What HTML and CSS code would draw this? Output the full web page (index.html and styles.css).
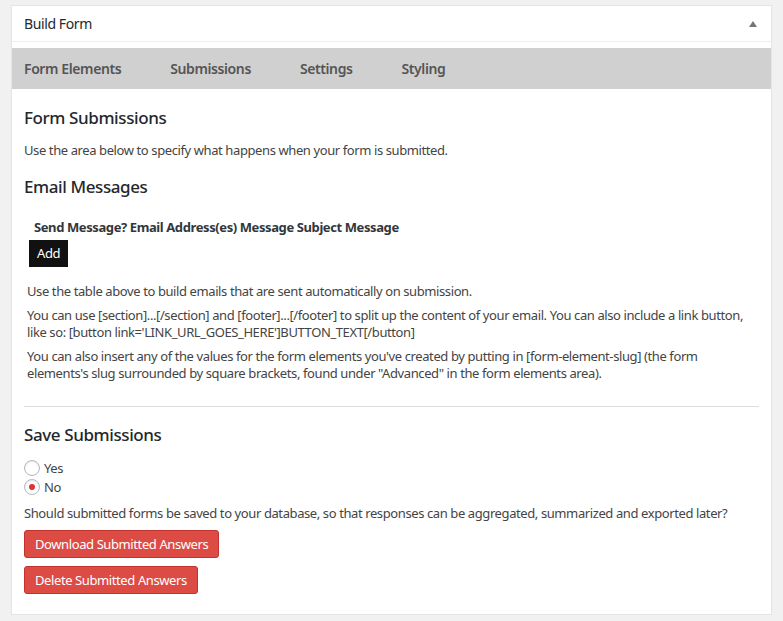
FILE: index.html
```html
<!DOCTYPE html>
<html lang="en">
<head>
    <meta charset="UTF-8">
    <meta name="viewport" content="width=device-width, initial-scale=1.0">
    <title>Build Form</title>
    <link rel="stylesheet" href="styles.css">
</head>
<body>
    <div class="postbox">
        <div class="postbox-header">
            <h2>Build Form</h2>
            <span class="toggle-arrow"></span>
        </div>
        <div class="postbox-inside">
            <ul class="tabs">
                <li>Form Elements</li>
                <li>Submissions</li>
                <li>Settings</li>
                <li>Styling</li>
            </ul>
            <div class="tab-panel">
                <h3>Form Submissions</h3>
                <p class="intro">Use the area below to specify what happens when your form is submitted.</p>

                <h3>Email Messages</h3>
                <table class="email-table">
                    <thead>
                        <tr><th>Send Message? Email Address(es) Message Subject Message</th></tr>
                    </thead>
                </table>
                <button class="btn-add">Add</button>
                <div class="help">
                    <p>Use the table above to build emails that are sent automatically on submission.</p>
                    <p>You can use [section]...[/section] and [footer]...[/footer] to split up the content of your email. You can also include a link button, like so: [button link='LINK_URL_GOES_HERE']BUTTON_TEXT[/button]</p>
                    <p>You can also insert any of the values for the form elements you've created by putting in [form-element-slug] (the form elements's slug surrounded by square brackets, found under "Advanced" in the form elements area).</p>
                </div>
                <hr>

                <h3>Save Submissions</h3>
                <div class="radios">
                    <label><span class="radio"></span>Yes</label>
                    <label><span class="radio checked"></span>No</label>
                </div>
                <p class="intro">Should submitted forms be saved to your database, so that responses can be aggregated, summarized and exported later?</p>
                <div class="actions">
                    <button class="btn-red">Download Submitted Answers</button>
                    <button class="btn-red">Delete Submitted Answers</button>
                </div>
            </div>
        </div>
    </div>
</body>
</html>
```

FILE: styles.css
```css
body {
    margin: 0;
    padding: 5px 11px 0 11px;
    background: #f1f1f1;
    font-family: "Noto Sans", "Open Sans", sans-serif;
    color: #444;
    font-size: 13px;
    letter-spacing: -0.4px;
}
.postbox {
    background: #fff;
    border: 1px solid #e5e5e5;
    box-shadow: 0 1px 1px rgba(0,0,0,0.04);
}
.postbox-header {
    display: flex;
    align-items: center;
    justify-content: space-between;
    height: 35px;
    padding: 0 12px;
    border-bottom: 1px solid #eee;
}
.postbox-header h2 {
    margin: 0;
    font-size: 14px;
    font-weight: 400;
    color: #23282d;
}
.toggle-arrow {
    width: 0;
    height: 0;
    border-left: 4px solid transparent;
    border-right: 4px solid transparent;
    border-bottom: 6px solid #72777c;
    margin-right: 2px;
}
.postbox-inside {
    padding-top: 6px;
    padding-bottom: 20px;
}
.tabs {
    list-style: none;
    margin: 0;
    padding: 0 12px;
    height: 41px;
    display: flex;
    align-items: center;
    gap: 49px;
    background: #d0d0d0;
}
.tabs li {
    font-size: 14px;
    font-weight: 600;
    color: #555;
}
.tab-panel {
    padding: 0 12px;
}
h3 {
    margin: 0;
    font-size: 17px;
    font-weight: 500;
    color: #23282d;
}
.tab-panel h3:first-child {
    margin-top: 17px;
}
.intro {
    margin: 12px 0 16px;
}
.email-table {
    margin: 20px 0 0 6px;
    border-collapse: collapse;
}
.email-table th {
    padding: 0 4px;
    font-size: 13px;
    font-weight: 700;
    color: #32373c;
    text-align: left;
}
.btn-add {
    display: block;
    margin: 4px 0 0 5px;
    padding: 4px 8px 5px;
    background: #111;
    color: #fff;
    border: none;
    font-family: inherit;
    font-size: 13px;
    letter-spacing: inherit;
}
.help {
    margin: 16px 0 0 3px;
}
.help p {
    margin: 0 0 7px;
    line-height: 17px;
}
hr {
    margin: 24px 0 16px;
    border: 0;
    border-top: 1px solid #ddd;
}
.radios {
    margin-top: 13px;
    display: flex;
    flex-direction: column;
    gap: 1px;
}
.radios label {
    display: flex;
    align-items: center;
    gap: 4px;
}
.radio {
    width: 14px;
    height: 14px;
    border: 1px solid #b4b9be;
    border-radius: 50%;
    box-shadow: inset 0 1px 2px rgba(0,0,0,0.1);
    display: flex;
    align-items: center;
    justify-content: center;
}
.radio.checked::before {
    content: "";
    width: 6px;
    height: 6px;
    border-radius: 50%;
    background: #dc3232;
}
.radios + .intro {
    margin: 8px 0;
}
.actions {
    display: flex;
    flex-direction: column;
    align-items: flex-start;
    gap: 8px;
}
.btn-red {
    padding: 0 10px;
    height: 28px;
    background: #dd4b45;
    border: 1px solid #c3332d;
    border-radius: 3px;
    color: #fff;
    font-family: inherit;
    font-size: 13px;
    letter-spacing: inherit;
}
```
